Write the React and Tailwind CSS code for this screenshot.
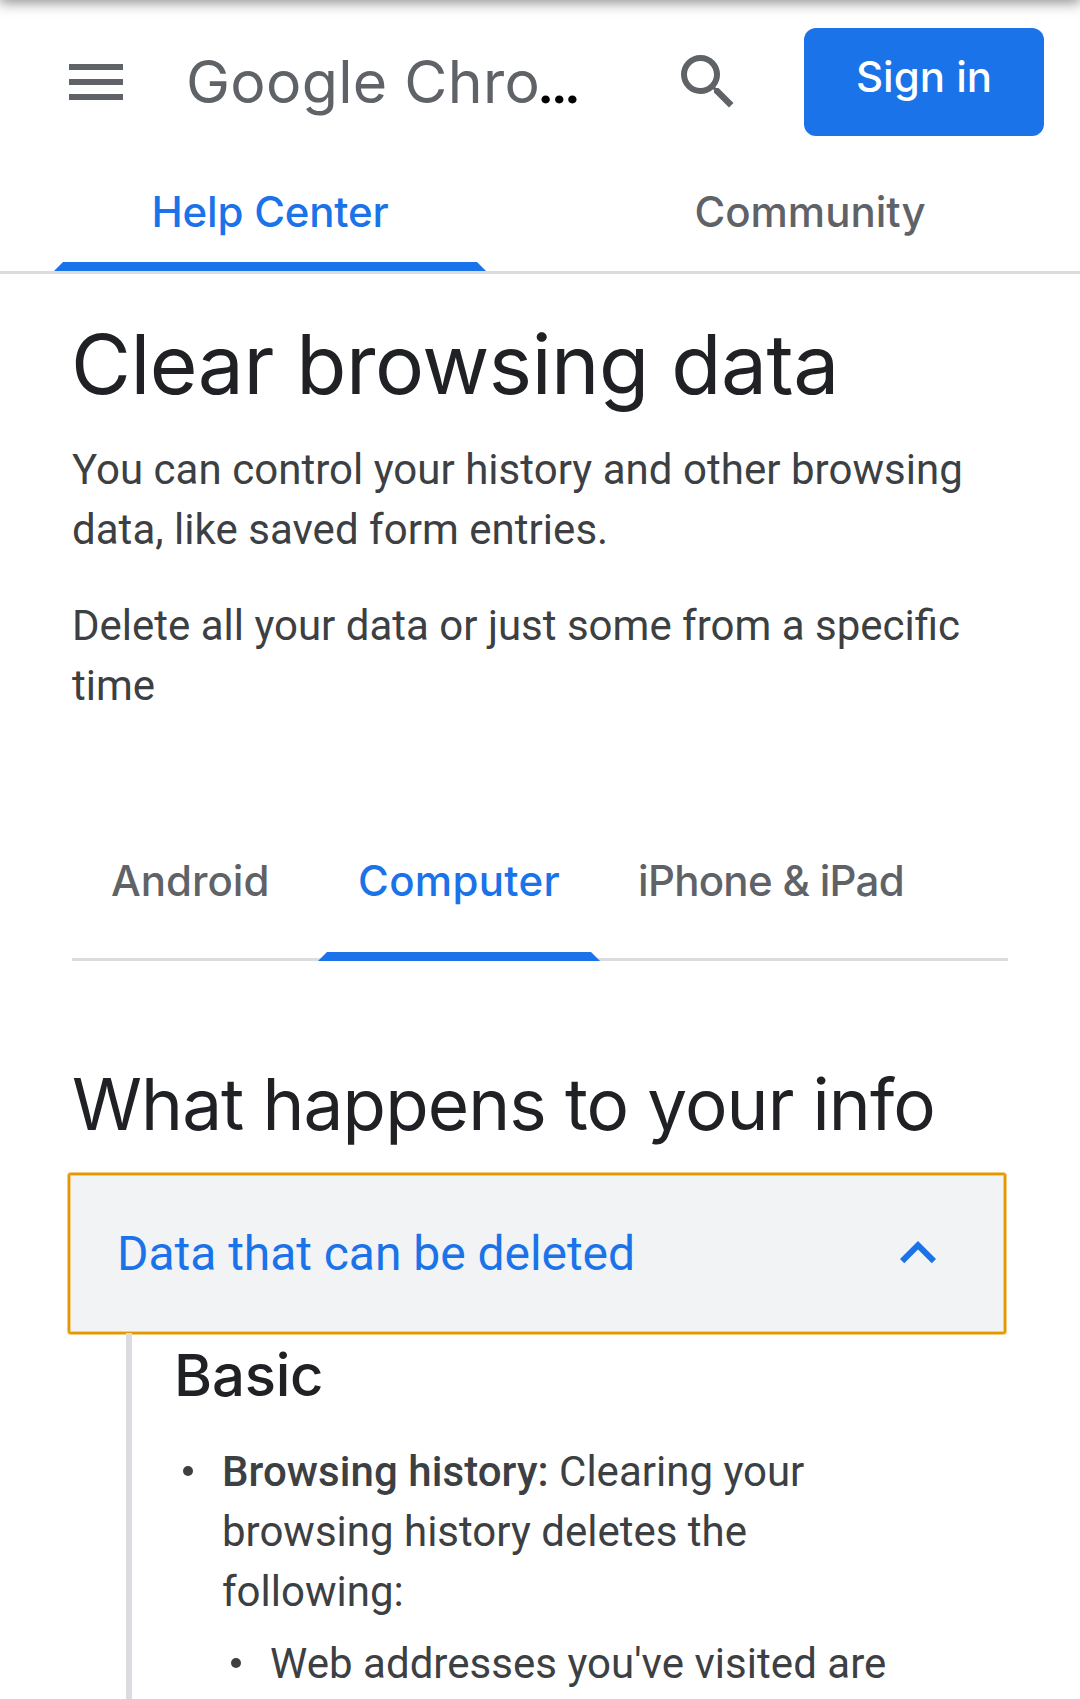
import React from "react";

const MenuIcon = () => (
  <svg className="size-[72px] shrink-0 fill-[#5f6368]" viewBox="0 0 24 24">
    <path d="M3 18h18v-2H3v2zm0-5h18v-2H3v2zm0-7v2h18V6H3z" />
  </svg>
);

const SearchIcon = () => (
  <svg className="size-[72px] shrink-0 fill-[#5f6368]" viewBox="0 0 24 24">
    <path d="M15.5 14h-.79l-.28-.27A6.471 6.471 0 0 0 16 9.5 6.5 6.5 0 1 0 9.5 16c1.61 0 3.09-.59 4.23-1.57l.27.28v.79l5 4.99L20.49 19l-4.99-5zm-6 0C7.01 14 5 11.99 5 9.5S7.01 5 9.5 5 14 7.01 14 9.5 11.99 14 9.5 14z" />
  </svg>
);

const ChevronUpIcon = () => (
  <svg className="-mt-[2px] size-[72px] shrink-0 fill-[#1a73e8]" viewBox="0 0 24 24">
    <path d="M12 8l-6 6 1.41 1.41L12 10.83l4.59 4.58L18 14z" />
  </svg>
);

const Indicator = () => (
  <span className="h-[9px] w-full bg-[#1a73e8] [clip-path:polygon(9px_0,calc(100%-9px)_0,100%_100%,0_100%)]" />
);

function Header() {
  return (
    <header className="border-b-[3px] border-[#dadce0] font-medium">
      <div className="flex h-[136px] items-start pl-[60px] pr-9 pt-7">
        <div className="mt-[18px] flex items-center">
          <MenuIcon />
          <h2 className="ml-[54px] h-[72px] w-[486px] whitespace-nowrap text-[59px] font-normal leading-[72px] tracking-[0.3px] text-[#5f6368]">
            Google Chro<span className="-ml-[3px] font-['Roboto',sans-serif] text-[61px] font-medium leading-none text-black">…</span>
          </h2>
          <SearchIcon />
        </div>
        <button className="ml-auto flex h-[108px] w-[240px] justify-center rounded-xl bg-[#1a73e8] pt-[25px] text-[42px] leading-[48px] text-white">
          Sign in
        </button>
      </div>
      <nav className="grid h-[135px] grid-cols-2 text-[42px] leading-[48px]">
        <a className="flex flex-col items-center justify-between px-[54px] pt-[52px] tracking-[-0.2px] text-[#1a73e8]">
          Help Center
          <Indicator />
        </a>
        <a className="flex justify-center pt-[52px] text-[#5f6368]">Community</a>
      </nav>
    </header>
  );
}

function PlatformTabs() {
  return (
    <nav className="mt-[104px] flex h-[141px] text-[42px] font-medium leading-[48px] text-[#5f6368] shadow-[inset_0_-3px_#dadce0]">
      <a className="w-[246px] pl-[39px] pt-[37px]">Android</a>
      <a className="flex w-[282px] flex-col items-center justify-between pt-[37px] tracking-[0.3px] text-[#1a73e8]">
        Computer
        <Indicator />
      </a>
      <a className="whitespace-nowrap pl-[38px] pt-[37px] tracking-[-0.7px]">iPhone &amp; iPad</a>
    </nav>
  );
}

const Bullet = () => <span className="mt-6 size-[10px] shrink-0 rounded-full bg-[#3c4043]" />;

export default function App() {
  return (
    <div className="relative h-[1699px] w-[1080px] overflow-hidden bg-white font-['Inter',sans-serif] text-[#202124]">
      <div className="absolute inset-x-0 -top-3 h-3 shadow-[0_1px_14px_1px_rgba(0,0,0,0.5)]" />
      <Header />
      <main className="px-[72px] pt-[43px]">
        <h1 className="-ml-px whitespace-nowrap text-[82px] leading-[96px] tracking-[-0.5px]">Clear browsing data</h1>
        <div className="mt-[27px] flex flex-col gap-9 font-['Roboto',sans-serif] text-[42px] leading-[60px] text-[#3c4043]">
          <p className="tracking-[0.035px]">
            You can control your history and other browsing
            <br />
            data, like saved form entries.
          </p>
          <p>
            Delete all your data or just some from a specific
            <br />
            time
          </p>
        </div>

        <PlatformTabs />

        <h2 className="mt-[101px] whitespace-nowrap text-[71px] leading-[84px] tracking-[-0.9px]">What happens to your info</h2>

        <section className="mt-[27px]">
          <button className="-ml-1 flex h-[161px] w-[938px] items-center justify-between rounded-[3px] border-2 border-[#e59700] bg-[#f1f3f4] pl-[47px] pr-[50px] font-['Roboto',sans-serif] text-[48px] leading-[60px] tracking-[-0.04px] text-[#1a73e8] shadow-[0_0_0_1px_rgba(229,151,0,0.5),inset_0_0_0_1px_rgba(229,151,0,0.4)]">
            Data that can be deleted
            <ChevronUpIcon />
          </button>
          <div className="-mt-px ml-[54px] h-[366px] border-l-[6px] border-[#dadce0] pl-[42px] pt-[6px]">
            <h3 className="text-[58px] font-medium leading-[72px] tracking-[-0.2px]">Basic</h3>
            <ul className="mt-[31px] font-['Roboto',sans-serif] text-[42px] leading-[60px] text-[#3c4043]">
              <li className="flex gap-[29px] pl-[9px]">
                <Bullet />
                <div>
                  <p className="whitespace-nowrap">
                    <strong className="font-medium tracking-[0.06px]">Browsing history:</strong> Clearing your
                    <br />
                    browsing history deletes the
                    <br />
                    following:
                  </p>
                  <ul className="mt-3">
                    <li className="flex gap-[29px] pl-[9px]">
                      <Bullet />
                      <span className="whitespace-nowrap tracking-[0.035px]">Web addresses you've visited are</span>
                    </li>
                  </ul>
                </div>
              </li>
            </ul>
          </div>
        </section>
      </main>
    </div>
  );
}
